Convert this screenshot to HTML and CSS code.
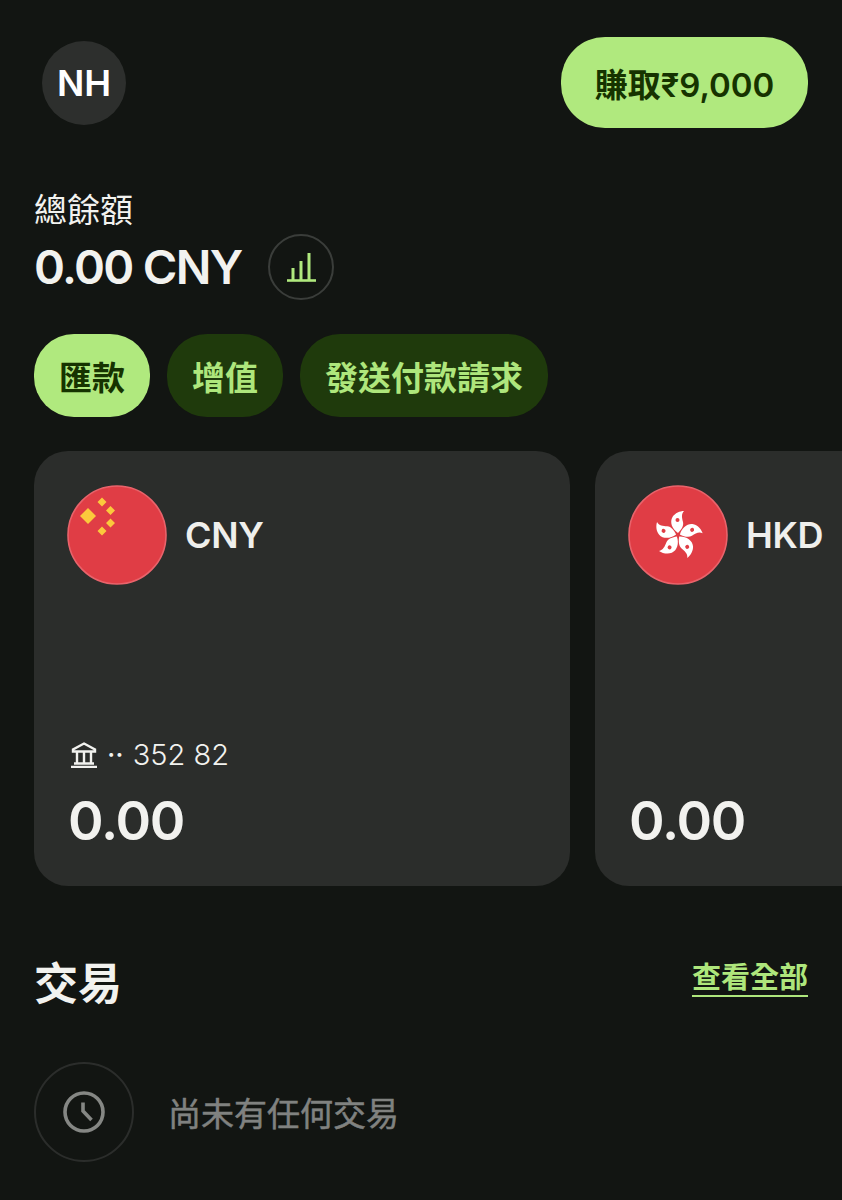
FILE: index.html
```html
<!DOCTYPE html>
<html lang="zh-Hant">
<head>
  <meta charset="UTF-8" />
  <meta name="viewport" content="width=device-width, initial-scale=1" />
  <title>總餘額</title>
  <link rel="stylesheet" href="styles.css">
</head>
<body>
  <header class="topbar">
    <div class="avatar">NH</div>
    <a class="earn" href="#">賺取₹9,000</a>
  </header>

  <section class="balance">
    <div class="balance-label">總餘額</div>
    <div class="balance-row">
      <span class="balance-amount">0.00 CNY</span>
      <span class="insights">
        <svg width="29" height="29" viewBox="0 0 29 29" fill="none" stroke="#b0e97e">
          <path d="M0 27.500H29" stroke-width="2.600" />
          <path d="M6 27V15M14 27V8M22 27V0" stroke-width="3" />
        </svg>
      </span>
    </div>
  </section>

  <nav class="actions">
    <a class="pill pill-main" href="#">匯款</a>
    <a class="pill" href="#">增值</a>
    <a class="pill" href="#">發送付款請求</a>
  </nav>

  <div class="cards">
    <div class="card">
      <div class="card-head">
        <svg class="flag" viewBox="0 0 100 100">
          <circle cx="50" cy="50" r="49" fill="#e03d45" stroke="#e9636b" stroke-width="1.600" />
          <path d="M21 23 29 31 21 39 13 31Z" fill="#fbc93c" />
          <path d="M35 12.500 39.500 17 35 21.500 30.500 17ZM43.500 21 48 25.500 43.500 30 39 25.500ZM43.500 33.500 48 38 43.500 42.500 39 38ZM35 41.500 39.500 46 35 50.500 30.500 46Z" fill="#fbc93c" />
        </svg>
        <span class="code">CNY</span>
      </div>
      <div class="card-foot">
        <div class="account">
          <svg width="28" height="26" viewBox="0 0 28 26" fill="none" stroke="#f2f2ef" stroke-width="2.400">
            <path d="M14 1.500 25 7.500V9.500H3V7.500Z" />
            <path d="M7 10V21M14 10V21M21 10V21" />
            <path d="M4 21.500H24M1 25H27" />
          </svg>
          <span class="dots">··</span>
          <span>352 82</span>
        </div>
        <div class="amount">0.00</div>
      </div>
    </div>

    <div class="card">
      <div class="card-head">
        <svg class="flag" viewBox="0 0 100 100">
          <defs>
            <g id="petal">
              <path d="M0-2C-6-6-8.500-13-5.500-18-3-22 2-24 6-24 3-21 4-17 5-13 6-9 3-5 0-2Z" fill="#fff" />
              <circle cx="-.5" cy="-15" r="2" fill="#e03d45" />
            </g>
          </defs>
          <circle cx="50" cy="50" r="49" fill="#e03d45" stroke="#e9636b" stroke-width="1.600" />
          <g transform="translate(50 50)">
            <use href="#petal" />
            <use href="#petal" transform="rotate(72)" />
            <use href="#petal" transform="rotate(144)" />
            <use href="#petal" transform="rotate(216)" />
            <use href="#petal" transform="rotate(288)" />
          </g>
        </svg>
        <span class="code">HKD</span>
      </div>
      <div class="card-foot">
        <div class="amount">0.00</div>
      </div>
    </div>
  </div>

  <div class="section-head">
    <h2>交易</h2>
    <a class="see-all" href="#">查看全部</a>
  </div>

  <div class="empty">
    <span class="empty-icon">
      <svg width="44" height="44" viewBox="0 0 44 44" fill="none" stroke="#858784" stroke-width="3.600">
        <circle cx="22" cy="22" r="19" />
        <path d="M21 12.500V21L29.500 30" />
      </svg>
    </span>
    <span class="empty-text">尚未有任何交易</span>
  </div>
</body>
</html>
```

FILE: styles.css
```css
body {
  margin: 0;
  height: 1200px;
  overflow: hidden;
  background: #121512;
  color: #f2f2ef;
  font-family: 'Inter', 'Noto Sans CJK TC', sans-serif;
}

a {
  text-decoration: none;
}

.topbar {
  display: flex;
  justify-content: space-between;
  align-items: center;
  padding: 37px 34px 0 42px;
}

.avatar {
  width: 84px;
  height: 84px;
  border-radius: 50%;
  background: #2d2f2d;
  display: flex;
  align-items: center;
  justify-content: center;
  font-size: 36px;
  font-weight: 600;
  color: #fff;
}

.earn {
  width: 247px;
  height: 91px;
  border-radius: 44px;
  background: #b0e97e;
  color: #163300;
  display: flex;
  align-items: center;
  justify-content: center;
  font-size: 33px;
  font-weight: 600;
}

.balance {
  margin-top: 62px;
  padding-left: 34px;
}

.balance-label {
  font-size: 33px;
  line-height: 40px;
  font-weight: 400;
}

.balance-row {
  display: flex;
  align-items: center;
  gap: 27px;
  margin-top: 4px;
}

.balance-amount {
  font-size: 47px;
  font-weight: 600;
  line-height: 66px;
  letter-spacing: -1.700px;
}

.insights {
  width: 66px;
  height: 66px;
  box-sizing: border-box;
  border: 2px solid #3a3d3a;
  border-radius: 50%;
  display: flex;
  align-items: center;
  justify-content: center;
}

.actions {
  display: flex;
  gap: 17px;
  margin-top: 34px;
  padding-left: 34px;
}

.pill {
  height: 83px;
  padding: 0 25px;
  border-radius: 40px;
  background: #1f3a0c;
  color: #aee67c;
  display: flex;
  align-items: center;
  font-size: 33px;
  font-weight: 700;
}

.pill-main {
  background: #b0e97e;
  color: #163300;
}

.cards {
  display: flex;
  gap: 25px;
  margin-top: 34px;
  padding-left: 34px;
}

.card {
  flex: 0 0 536px;
  height: 435px;
  box-sizing: border-box;
  padding: 34px 33px 0;
  border-radius: 34px;
  background: #2b2d2b;
  display: flex;
  flex-direction: column;
  justify-content: space-between;
}

.card-head {
  display: flex;
  align-items: center;
  gap: 18px;
}

.flag {
  width: 100px;
  height: 100px;
}

.code {
  font-size: 36px;
  font-weight: 600;
  letter-spacing: -.3px;
  color: #efefec;
}

.card-foot {
  padding-bottom: 32px;
}

.account {
  display: flex;
  align-items: center;
  gap: 9px;
  padding-left: 3px;
  font-size: 29px;
  font-weight: 300;
  margin-bottom: 16px;
}

.dots {
  font-weight: 400;
}

.amount {
  font-size: 54px;
  font-weight: 600;
  line-height: 66px;
  padding-left: 1px;
  letter-spacing: -1.200px;
}

.section-head {
  display: flex;
  justify-content: space-between;
  align-items: center;
  margin-top: 66px;
  padding: 0 34px;
}

h2 {
  margin: 0;
  font-size: 44px;
  font-weight: 700;
  line-height: 64px;
}

.see-all {
  font-size: 29px;
  font-weight: 600;
  color: #aee67c;
  text-decoration: underline;
  text-underline-offset: 7px;
  margin-bottom: 18px;
}

.empty {
  display: flex;
  align-items: center;
  gap: 34px;
  margin-top: 46px;
  padding-left: 34px;
}

.empty-icon {
  width: 100px;
  height: 100px;
  box-sizing: border-box;
  border: 2px solid #2b2d2b;
  border-radius: 50%;
  display: flex;
  align-items: center;
  justify-content: center;
}

.empty-text {
  font-size: 33px;
  font-weight: 400;
  -webkit-text-stroke: .5px #808280;
  color: #808280;
}
```
